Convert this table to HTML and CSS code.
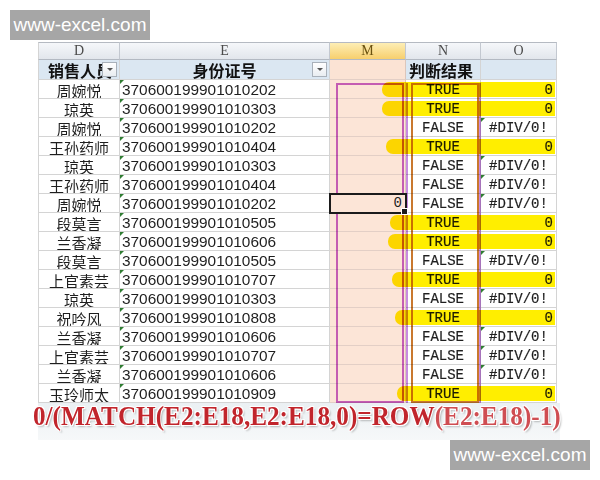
FILE: index.html
```html
<!DOCTYPE html>
<html>
<head>
<meta charset="utf-8">
<link rel="stylesheet" href="styles.css">
</head>
<body>
<div class="wm wm-tl">www-excel.com</div>

<div class="sheet">
  <div class="r hd">
    <div>D</div><div>E</div><div class="mh">M</div><div>N</div><div>O</div>
  </div>
  <div class="r lb">
    <div class="lbd"><span class="lbt">销售人员</span><span class="fb"></span></div>
    <div class="lbe"><span class="lbt">身份证号</span><span class="fb"></span></div>
    <div class="m"></div>
    <div class="lbn"><span class="lbt">判断结果</span></div>
    <div></div>
  </div>

  <div class="r"><div class="nm">周婉悦</div><div class="id">370600199901010202</div><div class="m"></div><div class="n">TRUE</div><div class="o">0</div><span class="hl" style="left:344px"></span></div>
  <div class="r"><div class="nm">琼英</div><div class="id">370600199901010303</div><div class="m"></div><div class="n">TRUE</div><div class="o">0</div><span class="hl" style="left:344px"></span></div>
  <div class="r"><div class="nm">周婉悦</div><div class="id">370600199901010202</div><div class="m"></div><div class="n">FALSE</div><div class="o err">#DIV/0!</div></div>
  <div class="r"><div class="nm">王孙药师</div><div class="id">370600199901010404</div><div class="m"></div><div class="n">TRUE</div><div class="o">0</div><span class="hl" style="left:348px"></span></div>
  <div class="r"><div class="nm">琼英</div><div class="id">370600199901010303</div><div class="m"></div><div class="n">FALSE</div><div class="o err">#DIV/0!</div></div>
  <div class="r"><div class="nm">王孙药师</div><div class="id">370600199901010404</div><div class="m"></div><div class="n">FALSE</div><div class="o err">#DIV/0!</div></div>
  <div class="r"><div class="nm">周婉悦</div><div class="id">370600199901010202</div><div class="m sel">0</div><div class="n">FALSE</div><div class="o err">#DIV/0!</div></div>
  <div class="r"><div class="nm">段莫言</div><div class="id">370600199901010505</div><div class="m"></div><div class="n">TRUE</div><div class="o">0</div><span class="hl" style="left:352px"></span></div>
  <div class="r"><div class="nm">兰香凝</div><div class="id">370600199901010606</div><div class="m"></div><div class="n">TRUE</div><div class="o">0</div><span class="hl" style="left:350px"></span></div>
  <div class="r"><div class="nm">段莫言</div><div class="id">370600199901010505</div><div class="m"></div><div class="n">FALSE</div><div class="o err">#DIV/0!</div></div>
  <div class="r"><div class="nm">上官素芸</div><div class="id">370600199901010707</div><div class="m"></div><div class="n">TRUE</div><div class="o">0</div><span class="hl" style="left:354px"></span></div>
  <div class="r"><div class="nm">琼英</div><div class="id">370600199901010303</div><div class="m"></div><div class="n">FALSE</div><div class="o err">#DIV/0!</div></div>
  <div class="r"><div class="nm">祝吟风</div><div class="id">370600199901010808</div><div class="m"></div><div class="n">TRUE</div><div class="o">0</div><span class="hl" style="left:357px"></span></div>
  <div class="r"><div class="nm">兰香凝</div><div class="id">370600199901010606</div><div class="m"></div><div class="n">FALSE</div><div class="o err">#DIV/0!</div></div>
  <div class="r"><div class="nm">上官素芸</div><div class="id">370600199901010707</div><div class="m"></div><div class="n">FALSE</div><div class="o err">#DIV/0!</div></div>
  <div class="r"><div class="nm">兰香凝</div><div class="id">370600199901010606</div><div class="m"></div><div class="n">FALSE</div><div class="o err">#DIV/0!</div></div>
  <div class="r"><div class="nm">玉玲师太</div><div class="id">370600199901010909</div><div class="m"></div><div class="n">TRUE</div><div class="o">0</div><span class="hl" style="left:359px"></span></div>

  <span class="box box-m"></span>
  <span class="box box-n2"></span>
  <span class="box box-n"></span>

  <div class="formula"><span class="ft">0/(MATCH(E2:E18,E2:E18,0)=ROW<span class="fade">(E2:E18)-1)</span></span></div>
</div>

<div class="wm wm-br">www-excel.com</div>
</body>
</html>
```

FILE: styles.css
```css
* { box-sizing: border-box; }
html, body { margin: 0; padding: 0; }
body {
  width: 600px;
  height: 480px;
  background: #fff;
  position: relative;
  overflow: hidden;
  font-family: "Liberation Sans", Arial, sans-serif;
}

.wm {
  position: absolute;
  width: 140px;
  height: 30px;
  background: #a6a6a6;
  color: #fff;
  font: 19px "Liberation Sans", Arial, sans-serif;
  display: flex;
  align-items: center;
  justify-content: center;
  z-index: 5;
}
.wm-tl { left: 10px; top: 10px; }
.wm-br { left: 450px; top: 440px; }

.sheet {
  position: relative;
  margin: 42px 0 0 38px;
  width: 519px;
  isolation: isolate;
}

.r {
  display: grid;
  grid-template-columns: 82px 210px 76px 75px 76px;
  height: 19px;
  position: relative;
}
.r > div {
  border-right: 1px solid #d4d4d4;
  border-bottom: 1px solid #d4d4d4;
  display: flex;
  align-items: center;
  overflow: hidden;
  white-space: nowrap;
  color: #1e1e1e;
  line-height: 1;
}
.r > div:first-child { border-left: 1px solid #d4d4d4; }

/* column letters */
.hd { height: 18px; }
.hd > div {
  background: linear-gradient(#f5f7fa, #e2e6ec);
  border-top: 1px solid #b5bac2;
  border-right-color: #c3c8d0 !important;
  border-bottom-color: #b3b9c2 !important;
  justify-content: center;
  font: 14px/1 "Liberation Serif", serif;
  color: #4a4a4a;
}
.hd > .mh {
  background: linear-gradient(#fdeeb5, #f7cf6d);
  color: #6b5210;
}

/* label row */
.lb { height: 20px; }
.lb > div {
  background: #dbe7f2;
  font: bold 16px/1 "Noto Sans CJK SC", sans-serif;
  color: #111;
  position: relative;
  padding-top: 1px;
  overflow: visible !important;
}
.lb > .m { background: #fbe3d4; }
.lbd { justify-content: flex-start; padding-left: 9px; }
.lbe { justify-content: center; }
.lbn { padding-left: 3px; }
.lbn .lbt { position: relative; z-index: 2; }
.fb {
  position: absolute;
  right: 2px;
  top: 2px;
  width: 15px;
  height: 15px;
  background: linear-gradient(#ffffff, #e9edf1);
  border: 1px solid #a9b1ba;
}
.fb::after {
  content: "";
  position: absolute;
  left: 4px;
  top: 5px;
  border-left: 3px solid transparent;
  border-right: 3px solid transparent;
  border-top: 3px solid #555;
}

/* data cells */
.nm {
  justify-content: center;
  padding-top: 2px;
  font: 15px/1 "Noto Sans CJK SC", sans-serif;
  color: #222;
}
.id {
  position: relative;
  padding-left: 2px;
  padding-top: 1px;
  font: 15.4px/1 "Liberation Sans", Arial, sans-serif;
  color: #262626;
}
.id::before, .err::before {
  content: "";
  position: absolute;
  left: 0;
  top: 0;
  border-top: 4px solid #2f7d32;
  border-right: 4px solid transparent;
}
.m {
  background: #fce5d7;
  border-right-color: #dcc6bb !important;
  border-bottom-color: #e3cfc6 !important;
}
.n {
  justify-content: center;
  padding-top: 1px;
  font: 14px/1 "Liberation Mono", monospace;
  -webkit-text-stroke: 0.2px #222;
}
.o {
  justify-content: flex-end;
  padding-right: 3px;
  padding-top: 1px;
  font: 14px/1 "Liberation Mono", monospace;
  -webkit-text-stroke: 0.2px #222;
  position: relative;
}
.o.err { justify-content: center; padding-right: 0; }

.sel {
  justify-content: flex-end;
  padding-right: 3px;
  font: 14px/1 "Liberation Mono", monospace;
  outline: 2px solid #1b1b1b;
  outline-offset: -1px;
  position: relative;
  overflow: visible !important;
  z-index: 4;
}
.sel::after {
  content: "";
  position: absolute;
  right: -3px;
  bottom: -3px;
  width: 5px;
  height: 5px;
  background: #1b1b1b;
  border: 1px solid #fff;
}

/* marker highlights */
.hl {
  position: absolute;
  top: 2px;
  height: 15px;
  right: 2px;
  background: #ffee00;
  border-radius: 7px 0 0 7px;
  mix-blend-mode: multiply;
  z-index: 1;
}

.box {
  position: absolute;
  top: 41px;
  height: 320px;
  mix-blend-mode: multiply;
  z-index: 2;
}
.box-m { left: 298px; width: 68px; border: 2px solid #c766d3; }
.box-n2 { left: 368px; width: 75px; border: 2px solid #c88ae0; border-top: none; border-bottom: none; }
.box-n { left: 373px; width: 68px; border: 2px solid #c9782e; }

/* formula caption */
.formula {
  width: 522px;
  height: 37px;
  padding-top: 2px;
  background: linear-gradient(#ebf0f3, #f6f8f9);
  overflow: visible;
}
.ft {
  display: inline-block;
  margin-left: -5px;
  font: bold 28px/22px "Liberation Serif", serif;
  color: #c1252c;
  white-space: nowrap;
  transform: scaleX(0.9);
  transform-origin: left top;
  text-shadow: 0 0 1px #fff, 1px 1px 0 #fff, -1px -1px 0 #fff, 1px -1px 0 #fff, -1px 1px 0 #fff, 2px 2px 2px rgba(0,0,0,0.25);
}
.fade { color: #cf4d52; }
```
